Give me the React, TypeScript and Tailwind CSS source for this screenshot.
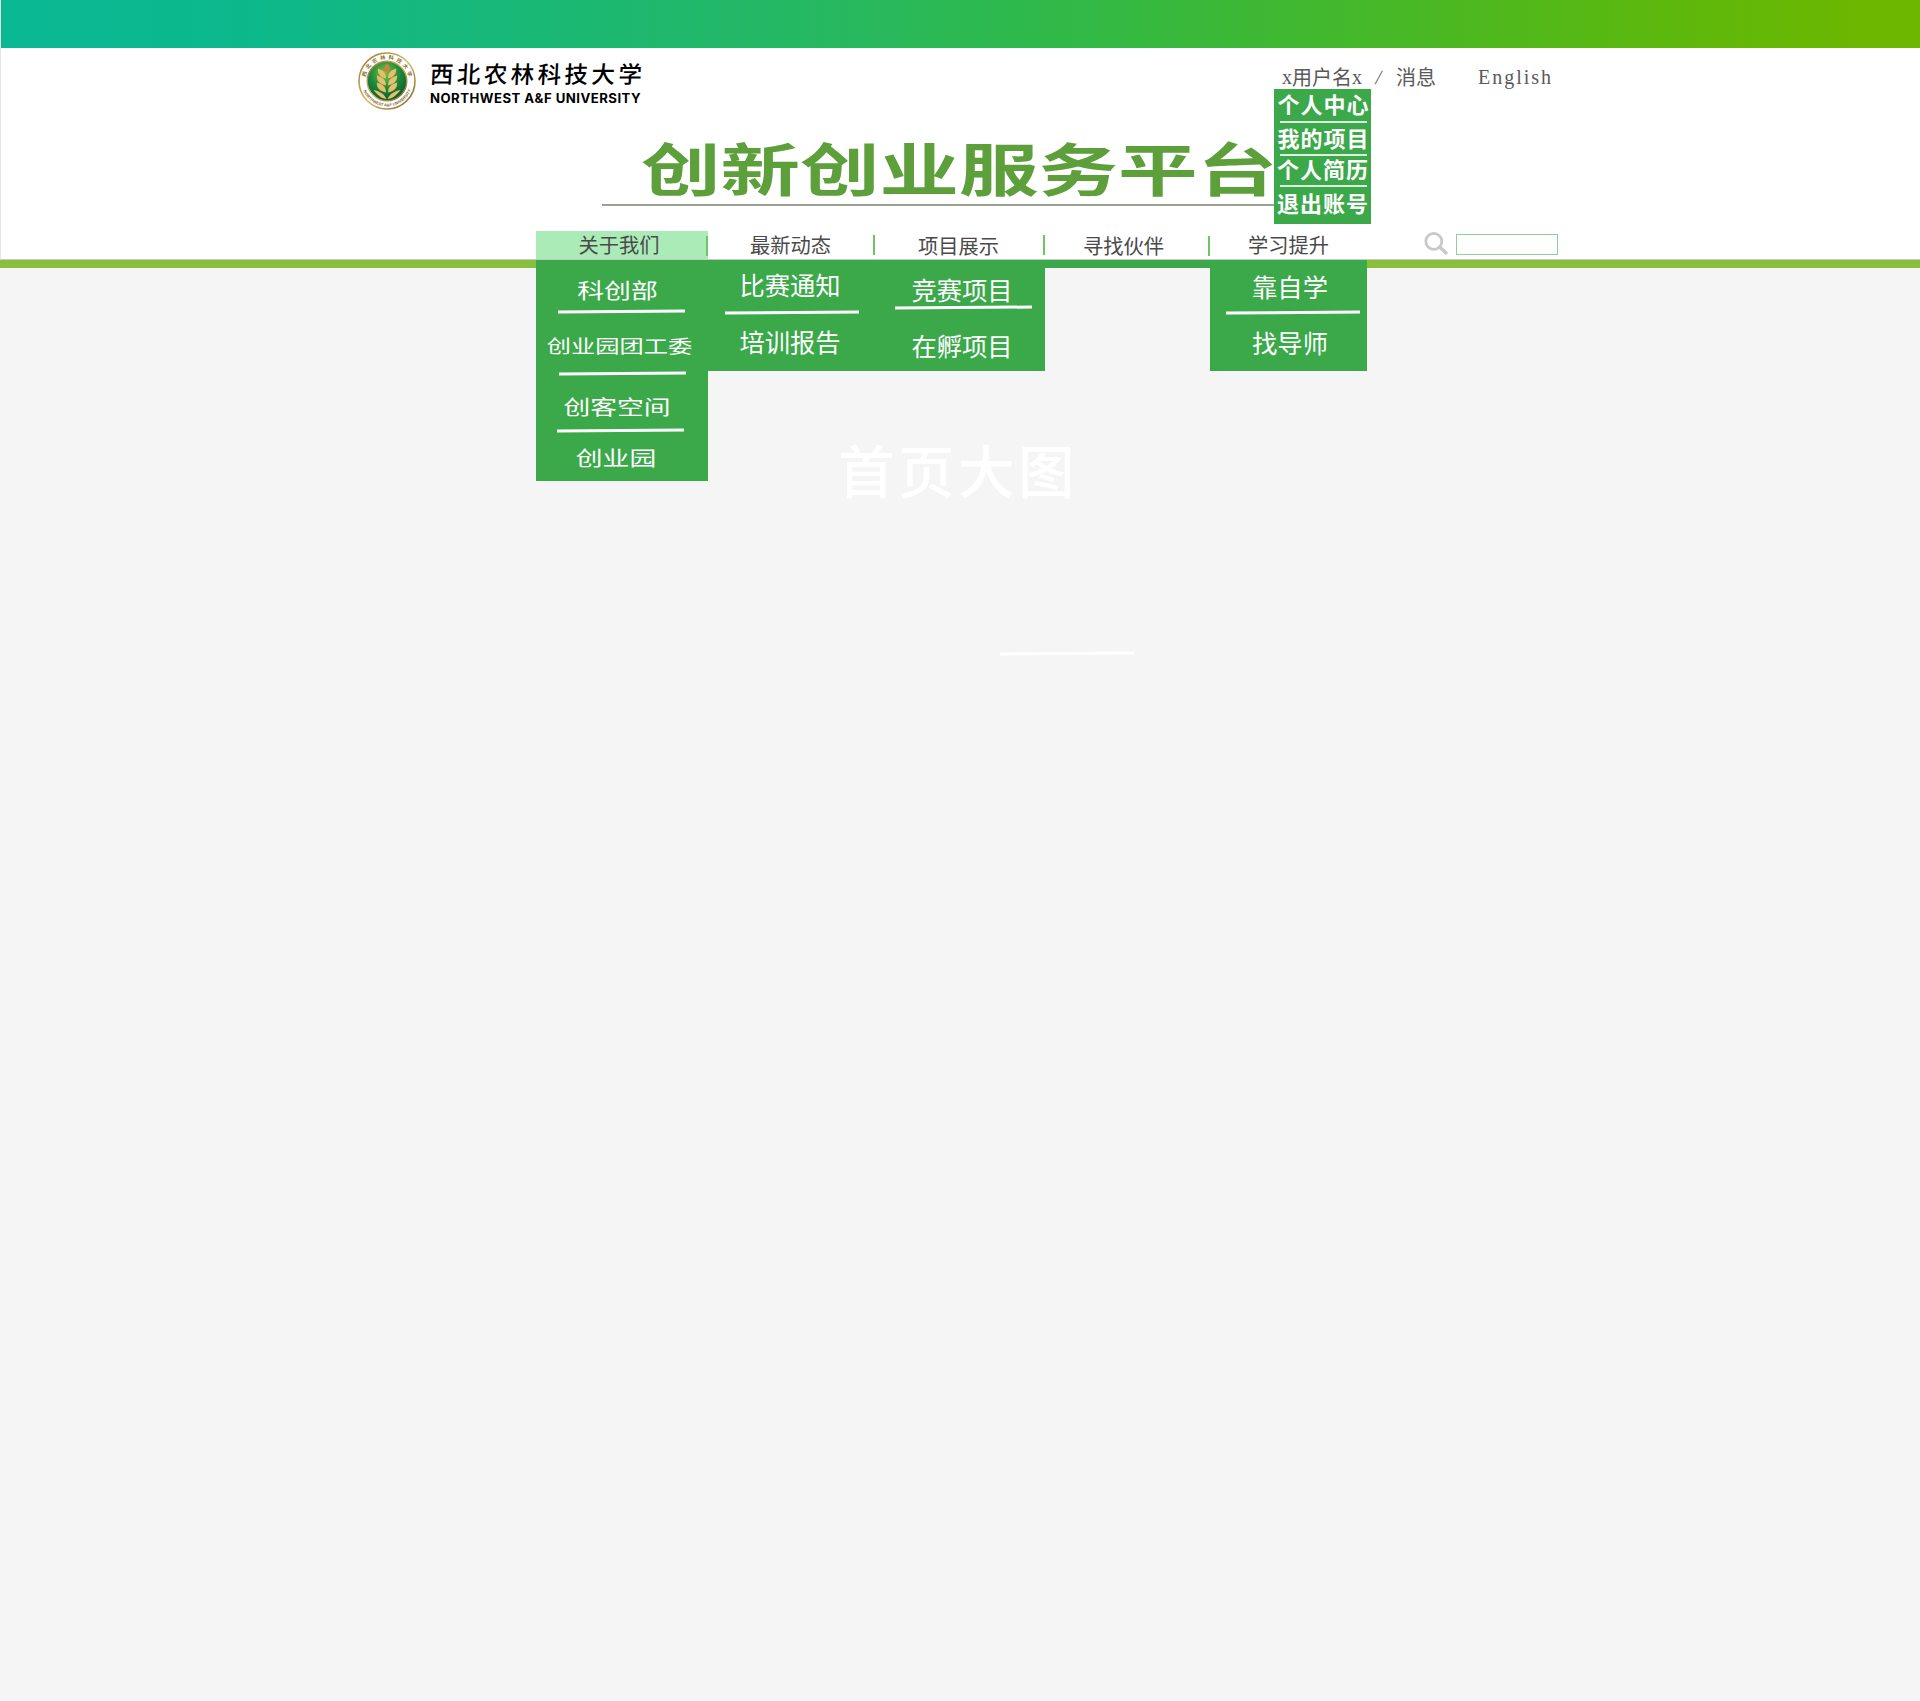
import React from "react";

const sans = "font-['Noto_Sans_CJK_SC',sans-serif]";

function Rule({ className }: { className: string }) {
  return <div className={`shrink-0 h-[3px] bg-white -rotate-[0.4deg] ${className}`} />;
}

function Entry({ className, text, children }: { className: string; text: string; children: string }) {
  return (
    <a className={`flex shrink-0 items-center justify-center whitespace-nowrap leading-none text-white ${className}`}>
      <span className={text}>{children}</span>
    </a>
  );
}

function Emblem() {
  return (
    <svg viewBox="0 0 58 58" className="h-[58px] w-[58px]">
      <defs>
        <radialGradient id="leaf" cx="45%" cy="30%" r="75%">
          <stop offset="0" stopColor="#7cc243" />
          <stop offset="0.5" stopColor="#1c8a3c" />
          <stop offset="1" stopColor="#04572b" />
        </radialGradient>
        <linearGradient id="gold" x1="0" y1="0" x2="1" y2="1">
          <stop offset="0" stopColor="#8f6f26" />
          <stop offset="0.5" stopColor="#d9bd72" />
          <stop offset="1" stopColor="#7d5c1a" />
        </linearGradient>
        <path id="ringTop" d="M7.200 29 A21.800 21.800 0 0 1 50.800 29" />
        <path id="ringBottom" d="M3.600 29 A25.400 25.400 0 0 0 54.400 29" />
      </defs>
      <circle cx="29" cy="29" r="28" fill="#fff" stroke="url(#gold)" strokeWidth="1.6" />
      <circle cx="29" cy="29" r="19.8" fill="url(#leaf)" stroke="url(#gold)" strokeWidth="1.4" />
      <text fontSize="5.2" fontWeight="700" fill="#8d6f2c" fontFamily="Noto Sans CJK SC">
        <textPath href="#ringTop" startOffset="4" textLength="60">西北农林科技大学</textPath>
      </text>
      <text fontSize="4" fontWeight="700" fill="#7d6229" fontFamily="Liberation Sans">
        <textPath href="#ringBottom" startOffset="10" textLength="60">NORTHWEST A&amp;F UNIVERSITY</textPath>
      </text>
      <g fill="#e9bd6e" transform="translate(29 29) scale(1.120 1) translate(-29 -29)">
        <path d="M29 11.500 C32.500 15 32 18.500 29 21 C26 18.500 25.500 15 29 11.500Z" fill="#c9853f" />
        <path d="M28 26.500 C22.500 25 20.500 21.500 20.800 16.500 C25.500 18 28.300 21 28 26.500Z" />
        <path d="M30 26.500 C35.500 25 37.500 21.500 37.200 16.500 C32.500 18 29.700 21 30 26.500Z" />
        <path d="M28 33.500 C22 32 19.700 28.500 20 23.500 C25 25 28.300 28 28 33.500Z" />
        <path d="M30 33.500 C36 32 38.300 28.500 38 23.500 C33 25 29.700 28 30 33.500Z" />
        <path d="M28 40.500 C22 39 19.700 35.500 20 30.500 C25 32 28.300 35 28 40.500Z" />
        <path d="M30 40.500 C36 39 38.300 35.500 38 30.500 C33 32 29.700 35 30 40.500Z" />
        <path d="M28.500 47 C26.500 42 23 39.500 17 38 C21.500 44.500 24.500 46.500 28.500 47Z" />
        <path d="M29.500 47 C31.500 42 35 39.500 41 38 C36.500 44.500 33.500 46.500 29.500 47Z" />
      </g>
    </svg>
  );
}

const tabs = [
  { label: "关于我们", cell: "w-[172px] bg-[#abebb7] pr-[6px] pt-[3px]", bar: "mt-[5px]" },
  { label: "最新动态", cell: "w-[167px] pt-[3px] pr-[2px]", bar: "mt-[4px]" },
  { label: "项目展示", cell: "w-[170px] pt-[4px] pr-[3px]", bar: "mt-[4px]" },
  { label: "寻找伙伴", cell: "w-[165px] pt-[4px] pr-[8px]", bar: "mt-[5px]" },
  { label: "学习提升", cell: "w-[157px] pt-[3px]", bar: "" },
];

export default function App() {
  return (
    <div className={`flex h-[1701px] w-[1920px] flex-col overflow-hidden bg-[#f5f5f5] ${sans}`}>
      <header className="relative flex h-[268px] shrink-0 flex-col border-b-8 border-[#88c03b] bg-white">
        <div className="flex h-[260px] flex-col border-b border-l border-b-[#c8c8c8] border-l-[#e6e6e6]">
          <div className="h-12 shrink-0 bg-[linear-gradient(90deg,#0ab894_0%,#0cb88c_12%,#27b85f_44%,#2fb94a_54%,#48b826_73%,#5db80c_87%,#6cb700_97%)]" />
          <div className="flex h-[183px] shrink-0 items-start">
            <div className="ml-[357px] mt-[4px] flex w-[320px] items-start gap-[14px]">
              <Emblem />
              <div className="flex flex-col pt-[8px]">
                <div className="h-[30px] origin-left -skew-x-3 whitespace-nowrap text-[23.500px] font-medium leading-[26px] tracking-[3.400px] text-black">
                  西北农林科技大学
                </div>
                <div className="w-[213px] origin-left scale-x-[1.014] whitespace-nowrap font-['Inter',sans-serif] text-[13px] font-bold leading-[16px] tracking-[0.450px] text-black">
                  NORTHWEST A&amp;F UNIVERSITY
                </div>
              </div>
            </div>
          </div>
          <nav className="flex h-7 shrink-0 pl-[535px]">
            {tabs.map((t, i) => (
              <div key={t.label} className={`relative flex shrink-0 justify-center ${t.cell}`}>
                <span className="whitespace-nowrap text-[20.250px] leading-[22px] text-[#4a4a4a]">{t.label}</span>
                {i < 4 && <span className={`absolute right-0 top-0 h-5 w-[2px] bg-[#70c463] ${t.bar}`} />}
              </div>
            ))}
            <div className="ml-[57px] flex items-start">
              <svg viewBox="0 0 26 26" className="h-[26px] w-[26px]" fill="none" stroke="#c9c9c9" strokeWidth="2.8">
                <circle cx="9.800" cy="10.300" r="8" />
                <path d="M15.800 16 L23 23" strokeWidth="3.400" />
              </svg>
              <input className="ml-[6px] mt-[3px] h-[21px] w-[102px] border border-[#8ecf9c] bg-white" />
            </div>
          </nav>
        </div>

        <h1 className="absolute left-[602px] top-[128px] flex h-[78px] w-[672px] justify-center border-b-2 border-[#9aa393] pl-[41px]">
          <span className="scale-x-[1.395] whitespace-nowrap text-[57px] font-bold leading-[76px] text-[#5d9f3b]">创新创业服务平台</span>
        </h1>

        <div className="absolute left-[1282px] top-[65px] flex items-center whitespace-nowrap text-[20px] leading-6 text-[#5a5a5a]">
          <span className="flex items-center">
            <span className="w-[10px] font-['Liberation_Serif',serif] text-[20px]">x</span>用户名
            <span className="w-[10px] font-['Liberation_Serif',serif] text-[20px]">x</span>
          </span>
          <span className="ml-[14px] w-[20px] origin-left -skew-x-12 font-['Liberation_Serif',serif] text-[20px]">/</span>
          <span>消息</span>
          <span className="ml-[42px] font-['Liberation_Serif',serif] text-[20px] tracking-[2px]">English</span>
        </div>

        <div className="absolute left-[1274px] top-[89px] flex h-[135px] w-[97px] flex-col items-center bg-[#3ba84a]">
          <Entry className="h-[32px] pb-[4px] pl-[2px]" text="text-[22px] font-bold tracking-[1px]">个人中心</Entry>
          <div className="ml-px h-[2px] w-[87px] bg-[#dff2e1]" />
          <Entry className="h-[31px] pb-[4px] pl-[2px]" text="text-[22px] font-bold tracking-[1px]">我的项目</Entry>
          <div className="ml-px h-[2px] w-[87px] bg-[#dff2e1]" />
          <Entry className="h-[29px] pb-[6px] pl-px" text="text-[22px] font-bold tracking-[1px]">个人简历</Entry>
          <div className="ml-px h-[2px] w-[87px] bg-[#dff2e1]" />
          <Entry className="h-[34px] pb-[4px] pl-px" text="text-[22px] font-bold tracking-[1px]">退出账号</Entry>
        </div>

        <div className="absolute left-[536px] top-[260px] z-10 flex h-2 w-[831px] items-start bg-[#3ba84a]">
          <div className="flex h-[221px] w-[172px] shrink-0 flex-col items-center bg-[#3ba84a]">
            <Entry className="mt-[13px] h-[32px] pr-[10px]" text="text-[21px] scale-x-[1.28]">科创部</Entry>
            <Rule className="mr-px mt-[5px] w-[127px]" />
            <Entry className="mt-[16px] h-[32px] pr-[5px]" text="text-[18.500px] scale-x-[1.31]">创业园团工委</Entry>
            <Rule className="mt-[11px] w-[127px]" />
            <Entry className="mt-[16px] h-[32px] pr-[10px]" text="text-[20px] scale-x-[1.34]">创客空间</Entry>
            <Rule className="mr-[4px] mt-[6px] w-[127px]" />
            <Entry className="mt-[10px] h-[32px] pr-[12px]" text="text-[20px] scale-x-[1.34]">创业园</Entry>
          </div>
          <div className="flex h-[111px] w-[167px] shrink-0 flex-col items-center bg-[#3ba84a]">
            <Entry className="mt-[9px] h-[32px] pr-[3px]" text="text-[25.300px]">比赛通知</Entry>
            <Rule className="mt-[10px] w-[134px]" />
            <Entry className="mt-[12px] h-[32px] pr-[3px]" text="text-[25.300px]">培训报告</Entry>
          </div>
          <div className="flex h-[111px] w-[170px] shrink-0 flex-col items-center bg-[#3ba84a]">
            <Entry className="mt-[14px] h-[32px] pl-[4px]" text="text-[25.300px]">竞赛项目</Entry>
            <Rule className="ml-[7px] w-[137px]" />
            <Entry className="mt-[21px] h-[32px] pl-[4px]" text="text-[25.300px]">在孵项目</Entry>
          </div>
          <div className="ml-[165px] flex h-[111px] w-[157px] shrink-0 flex-col items-center bg-[#3ba84a]">
            <Entry className="mt-[11px] h-[32px] pl-[3px]" text="text-[25.300px]">靠自学</Entry>
            <Rule className="ml-[9px] mt-[8px] w-[134px]" />
            <Entry className="mt-[13px] h-[32px] pl-[3px]" text="text-[25.300px]">找导师</Entry>
          </div>
        </div>
      </header>

      <main className="flex flex-col">
        <div className="ml-[838px] mt-[168px] h-[64px] whitespace-nowrap text-[56.500px] font-medium leading-[64px] tracking-[3.500px] text-white">首页大图</div>
        <Rule className="ml-[1000px] mt-[152px] w-[134px]" />
      </main>
    </div>
  );
}
